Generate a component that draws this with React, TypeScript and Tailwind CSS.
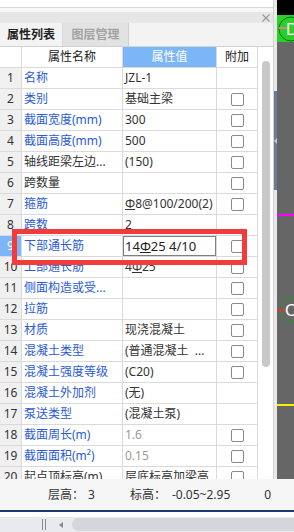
import React from "react";

type Row = {
  n: number;
  name: string;
  blue: boolean;
  value: React.ReactNode;
  gray?: boolean;
  cb: boolean;
};

const Steel = () => (
  <span className="inline-block underline decoration-1 underline-offset-[1px]">Φ</span>
);

const rows: Row[] = [
  { n: 1, name: "名称", blue: true, value: "JZL-1", cb: false },
  { n: 2, name: "类别", blue: true, value: "基础主梁", cb: true },
  { n: 3, name: "截面宽度(mm)", blue: true, value: "300", cb: true },
  { n: 4, name: "截面高度(mm)", blue: true, value: "500", cb: true },
  { n: 5, name: "轴线距梁左边...", blue: false, value: "(150)", cb: true },
  { n: 6, name: "跨数量", blue: false, value: "", cb: true },
  {
    n: 7,
    name: "箍筋",
    blue: true,
    value: (
      <>
        <Steel />8@100/200(2)
      </>
    ),
    cb: true,
  },
  { n: 8, name: "跨数", blue: true, value: "2", cb: false },
  { n: 9, name: "下部通长筋", blue: true, value: "", cb: true },
  {
    n: 10,
    name: "上部通长筋",
    blue: true,
    value: (
      <>
        4<Steel />25
      </>
    ),
    cb: true,
  },
  { n: 11, name: "侧面构造或受...", blue: true, value: "", cb: true },
  { n: 12, name: "拉筋", blue: true, value: "", cb: true },
  { n: 13, name: "材质", blue: true, value: "现浇混凝土", cb: true },
  { n: 14, name: "混凝土类型", blue: true, value: "(普通混凝土  ...", cb: true },
  { n: 15, name: "混凝土强度等级", blue: true, value: "(C20)", cb: true },
  { n: 16, name: "混凝土外加剂", blue: true, value: "(无)", cb: false },
  { n: 17, name: "泵送类型", blue: true, value: "(混凝土泵)", cb: false },
  { n: 18, name: "截面周长(m)", blue: true, value: "1.6", gray: true, cb: true },
  { n: 19, name: "截面面积(m²)", blue: true, value: "0.15", gray: true, cb: true },
  { n: 20, name: "起点顶标高(m)", blue: false, value: "层底标高加梁高", cb: true },
];

function TableRow({ r }: { r: Row }) {
  const sel = r.n === 9;
  return (
    <div className="flex h-[21px] shrink-0 border-b border-[#dadada]">
      <div
        className={
          "w-[22px] shrink-0 border-r border-[#dadada] flex items-center justify-center " +
          (sel ? "bg-[#7db6f6] text-white" : "bg-[#f0f0f0] text-[#333]")
        }
      >
        {r.n}
      </div>
      <div
        className={
          "w-[101px] shrink-0 border-r border-[#dadada] flex items-center pl-[2px] overflow-hidden whitespace-nowrap " +
          (r.blue ? "text-[#2b5ad6]" : "text-[#333]")
        }
      >
        {r.name}
      </div>
      <div
        className={
          "relative w-[94px] shrink-0 border-r border-[#dadada] flex items-center pl-[2px] overflow-hidden whitespace-pre " +
          (r.gray ? "text-[#9a9a9a]" : "text-[#333]")
        }
      >
        {sel ? (
          <div className="absolute -top-px -left-px -bottom-px right-[-1px] border-2 border-[#7f7f7f] bg-white flex items-center pl-[1px] text-[13px] text-[#222]">
            14<Steel />25 4/10
          </div>
        ) : (
          r.value
        )}
      </div>
      <div className="w-[41px] shrink-0 border-r border-[#dadada] flex items-center justify-center">
        {r.cb && (
          <div className="w-[13px] h-[13px] rounded-[2px] border border-[#8a8a8a] bg-white" />
        )}
      </div>
    </div>
  );
}

export default function App() {
  return (
    <div className="relative w-[294px] h-[532px] overflow-hidden bg-white text-[12px] leading-none text-[#333] font-['Noto_Sans','Noto_Sans_CJK_SC',sans-serif]">
      <div className="flex h-[479px]">
        {/* left panel */}
        <div className="w-[274px] shrink-0 flex flex-col border-r border-[#d2d2d2] bg-white">
          <div className="h-[8px] shrink-0 bg-white border-b border-[#d4d4d4]" />
          <div className="h-[4px] shrink-0 bg-[#f7f7f7]" />
          <div className="h-[11px] shrink-0 bg-[#e6e6e6] flex items-center justify-end pr-[3px]">
            <svg width="8" height="8" viewBox="0 0 8 8">
              <path d="M0.5 0.5 L7.5 7.5 M7.5 0.5 L0.5 7.5" stroke="#9a9a9a" strokeWidth="1.2" />
            </svg>
          </div>
          <div className="h-[24px] shrink-0 bg-[#f3f3f3] border-b border-[#d2d2d2] flex">
            <div className="w-[63px] flex items-center justify-center font-bold text-[#222] border-r border-[#d6d6d6]">
              属性列表
            </div>
            <div className="w-[66px] flex items-center justify-center font-bold text-[#a2a2a2] bg-[#e2e2e2] border-r border-[#cfcfcf]">
              图层管理
            </div>
          </div>
          <div className="flex flex-1 min-h-0">
            <div className="w-[258px] shrink-0 flex flex-col overflow-hidden">
              <div className="flex h-[21px] shrink-0 border-b border-[#dadada]">
                <div className="w-[22px] shrink-0 border-r border-[#dadada] bg-white" />
                <div className="w-[101px] shrink-0 border-r border-[#dadada] flex items-center justify-center text-[#222]">
                  属性名称
                </div>
                <div className="w-[94px] shrink-0 border-r border-[#dadada] bg-[#7db6f6] flex items-center justify-center text-white">
                  属性值
                </div>
                <div className="w-[41px] shrink-0 border-r border-[#dadada] flex items-center justify-center text-[#222]">
                  附加
                </div>
              </div>
              {rows.map((r) => (
                <TableRow key={r.n} r={r} />
              ))}
            </div>
            <div className="flex-1 pl-[4px] bg-white">
              <div className="mt-[14px] w-[8px] h-[306px] rounded-full bg-[#c8c8c8]" />
            </div>
          </div>
        </div>
        {/* splitter */}
        <div className="w-[3px] shrink-0 bg-[#e9e9e9] flex flex-col">
          <div className="mt-[91px] h-[99px] bg-[#6d7b8e] flex items-center justify-center">
            <div className="w-0 h-0 border-y-[3px] border-y-transparent border-r-[3px] border-r-[#c0c8d4]" />
          </div>
        </div>
        {/* canvas */}
        <svg width="17" height="479" viewBox="0 0 17 479" className="shrink-0 block">
          <rect x="0" y="0" width="17" height="479" fill="#666666" />
          <rect x="0" y="0" width="17" height="15" fill="#000000" />
          <rect x="0" y="15" width="17" height="27" fill="#27d127" />
          <circle cx="14" cy="29" r="12" fill="none" stroke="#0d6f0d" strokeWidth="1" />
          <line x1="2" y1="28" x2="10" y2="28" stroke="#f07a7a" strokeWidth="2" />
          <text x="9" y="35" fill="#ffffff" fontSize="17" fontFamily="Liberation Sans, sans-serif">
            D
          </text>
          <rect x="0" y="214" width="17" height="2" fill="#ff00ff" />
          <circle cx="15" cy="310" r="12" fill="none" stroke="#1f9a1f" strokeWidth="1" />
          <line x1="0" y1="310" x2="9" y2="310" stroke="#ff2a2a" strokeWidth="1.5" />
          <text x="8" y="316" fill="#ffffff" fontSize="17" fontFamily="Liberation Sans, sans-serif">
            C
          </text>
          <rect x="0" y="404" width="17" height="2" fill="#ffee00" />
        </svg>
      </div>
      {/* status bar */}
      <div className="h-[31px] bg-[#f6f6f6] flex items-center pl-[48px] text-[#333]">
        <span>层高：</span>
        <span className="ml-[4px]">3</span>
        <span className="ml-[35px]">标高：</span>
        <span className="ml-[6px]">-0.05~2.95</span>
        <span className="ml-auto mr-[23px]">0</span>
      </div>
      <div className="h-[2px] bg-[#1f3a6a]" />
      <div className="h-[5px] bg-white" />
      <div className="h-[15px] bg-[#e9eaee] flex items-center">
        <div className="ml-[42px] flex gap-[2px]">
          <div className="w-px h-[11px] bg-[#8a8a8a]" />
          <div className="w-px h-[11px] bg-[#8a8a8a]" />
        </div>
        <div className="ml-[13px] w-0 h-0 border-y-[3px] border-y-transparent border-r-[4px] border-r-[#8a8a8a]" />
        <div className="ml-[9px] flex-1 h-[13px] rounded-l-full bg-[#d5d6dc]" />
      </div>
      {/* red highlight box */}
      <div className="absolute left-[12px] top-[229px] w-[235px] h-[36px] border-[5px] border-[#f23b3b] pointer-events-none" />
    </div>
  );
}
